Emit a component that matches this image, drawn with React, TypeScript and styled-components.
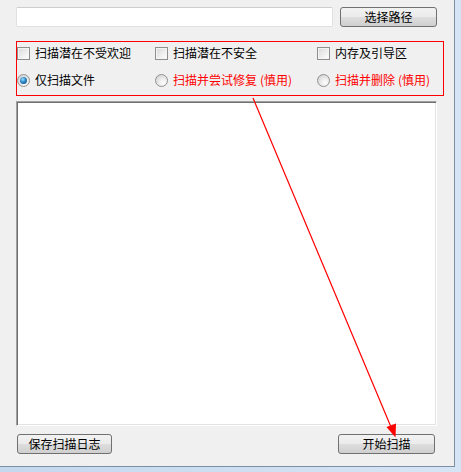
import styled, { createGlobalStyle } from 'styled-components';

const GlobalStyle = createGlobalStyle`
  html, body {
    margin: 0;
    padding: 0;
    background: #f0f0f0;
  }
  body {
    font-family: "Noto Sans CJK SC", "Liberation Sans", sans-serif;
    font-size: 12px;
  }
`;

const Frame = styled.div`
  position: relative;
  width: 461px;
  height: 472px;
  box-sizing: border-box;
  padding: 0 6px 5px 0;
  background: linear-gradient(90deg, #c4d8ee, #d6e5f5);
`;

const Client = styled.div`
  display: flex;
  flex-direction: column;
  width: 455px;
  height: 467px;
  box-sizing: border-box;
  padding-left: 16px;
  background: #f0f0f0;
  border-right: 1px solid #7d8fa5;
  border-bottom: 1px solid #7d8fa5;
`;

const PathRow = styled.div`
  display: flex;
  align-items: center;
  gap: 7px;
  margin-top: 7px;
  height: 20px;
`;

const PathInput = styled.div`
  width: 317px;
  height: 20px;
  box-sizing: border-box;
  background: #fff;
  border: 1px solid #e0e0e0;
  border-top-color: #cdcdcd;
  border-radius: 2px;
`;

const Button = styled.button<{ $w: number; $ml?: number }>`
  width: ${(p) => p.$w}px;
  height: 20px;
  margin-left: ${(p) => p.$ml ?? 0}px;
  padding: 0;
  box-sizing: border-box;
  border: 1px solid #707070;
  border-radius: 3px;
  background: linear-gradient(#f2f2f2 0%, #ebebeb 48%, #dddddd 52%, #cfcfcf 100%);
  font-family: "Noto Sans CJK SC", "Liberation Sans", sans-serif;
  font-size: 12px;
  line-height: 1;
  color: #000;
`;

const OptionGroup = styled.div`
  display: grid;
  grid-template-columns: 138px 162px 1fr;
  grid-template-rows: 20px 20px;
  row-gap: 7px;
  width: 428px;
  height: 55px;
  box-sizing: border-box;
  margin-top: 14px;
  padding: 1px 0 5px 0;
  border: 1px solid #ff0000;
`;

const Option = styled.label<{ $red?: boolean }>`
  display: flex;
  align-items: center;
  gap: 5px;
  color: ${(p) => (p.$red ? '#ff0000' : '#000')};
  line-height: 1;
  white-space: nowrap;
`;

const Paren = styled.span`
  margin: 0 1px 0 3px;
`;

const CheckBox = styled.span`
  width: 13px;
  height: 13px;
  box-sizing: border-box;
  border: 1px solid #8e8f8f;
  background: linear-gradient(135deg, #d8d8d8 0%, #f4f4f4 70%, #ffffff 100%);
  box-shadow: inset 0 0 0 1px #f4f4f4;
  flex: none;
`;

const Radio = styled.span<{ $on?: boolean }>`
  position: relative;
  width: 13px;
  height: 13px;
  box-sizing: border-box;
  border-radius: 50%;
  border: 1px solid #929292;
  background: radial-gradient(circle at 65% 70%, #ffffff 0%, #e6e6e6 50%, #c8c8c8 100%);
  flex: none;
  &::after {
    content: '';
    display: ${(p) => (p.$on ? 'block' : 'none')};
    position: absolute;
    left: 2px;
    top: 2px;
    width: 7px;
    height: 7px;
    border-radius: 50%;
    background: radial-gradient(circle at 40% 35%, #9ee0ff 0%, #2a86c8 45%, #0b3f6e 100%);
  }
`;

const ListBox = styled.div`
  width: 421px;
  height: 325px;
  box-sizing: border-box;
  margin-top: 5px;
  background: #fff;
  border: 1px solid;
  border-color: #a0a0a0 #ffffff #ffffff #a0a0a0;
  box-shadow: inset 1px 1px 0 #6f6f6f, inset -1px -1px 0 #e3e3e3;
`;

const BottomRow = styled.div`
  display: flex;
  align-items: center;
  margin-top: 8px;
  height: 20px;
`;

const ArrowLayer = styled.svg`
  position: absolute;
  left: 0;
  top: 0;
  pointer-events: none;
`;

const App = () => {
  const checks = ['扫描潜在不受欢迎', '扫描潜在不安全', '内存及引导区'];
  const radios = [
    { text: '仅扫描文件', note: '', on: true, red: false },
    { text: '扫描并尝试修复', note: '(慎用)', on: false, red: true },
    { text: '扫描并删除', note: '(慎用)', on: false, red: true },
  ];
  return (
    <>
      <GlobalStyle />
      <Frame>
        <Client>
          <PathRow>
            <PathInput />
            <Button $w={97}>选择路径</Button>
          </PathRow>
          <OptionGroup>
            {checks.map((c) => (
              <Option key={c}>
                <CheckBox />
                {c}
              </Option>
            ))}
            {radios.map((r) => (
              <Option key={r.text} $red={r.red}>
                <Radio $on={r.on} />
                <span>
                  {r.text}
                  {r.note && <Paren>{r.note}</Paren>}
                </span>
              </Option>
            ))}
          </OptionGroup>
          <ListBox />
          <BottomRow>
            <Button $w={95} $ml={1}>保存扫描日志</Button>
            <Button $w={97} $ml={226}>开始扫描</Button>
          </BottomRow>
        </Client>
        <ArrowLayer width="461" height="472" viewBox="0 0 461 472">
          <line x1="253" y1="98" x2="391" y2="427" stroke="#ff0000" strokeWidth="1.2" />
          <polygon points="395.5,437.5 386.5,427 396,423.5" fill="#ff0000" />
        </ArrowLayer>
      </Frame>
    </>
  );
};

export default App;
